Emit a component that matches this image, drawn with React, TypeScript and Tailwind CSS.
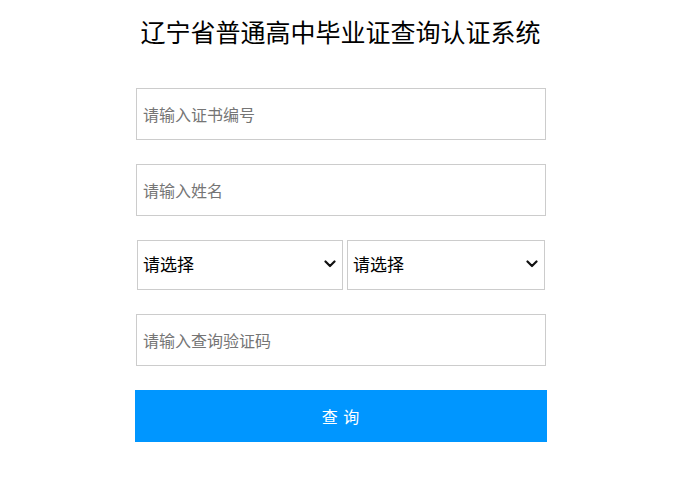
import React from "react";

const font = { fontFamily: '"Noto Sans CJK SC", "Noto Sans", sans-serif' };

function Chevron() {
  return (
    <svg width="12" height="8" viewBox="0 0 12 8" className="shrink-0">
      <path d="M1.5 1.5 L6 6 L10.5 1.5" fill="none" stroke="#111" strokeWidth="2.2" strokeLinecap="round" strokeLinejoin="round" />
    </svg>
  );
}

function Field({ placeholder }: { placeholder: string }) {
  return (
    <div className="h-[52px] w-[410px] ml-[1px] border border-[#cccccc] flex items-center pl-[6px] pb-[1px] bg-white">
      <input
        className="w-full outline-none text-[16px] text-black placeholder:text-[#757575] bg-transparent"
        style={font}
        placeholder={placeholder}
      />
    </div>
  );
}

function Select({ w }: { w: string }) {
  return (
    <div className={`h-[50px] ${w} border border-[#cccccc] flex items-center justify-between pl-[5px] pr-[6px] pb-[2px] bg-white`}>
      <span className="text-[17px] text-black" style={font}>请选择</span>
      <Chevron />
    </div>
  );
}

export default function App() {
  return (
    <div className="w-[678px] h-[485px] bg-white" style={font}>
      <div className="pt-[14px] text-center text-[25px] leading-[34px] text-black pl-[3px]">
        辽宁省普通高中毕业证查询认证系统
      </div>
      <div className="ml-[135px] mt-[40px] w-[412px] flex flex-col gap-[24px]">
        <Field placeholder="请输入证书编号" />
        <Field placeholder="请输入姓名" />
        <div className="flex ml-[2px] gap-[4px]">
          <Select w="w-[206px]" />
          <Select w="w-[198px]" />
        </div>
        <Field placeholder="请输入查询验证码" />
        <button className="h-[52px] w-[412px] bg-[#0096ff] text-white text-[16px] tracking-[1px]" style={font}>
          查 询
        </button>
      </div>
    </div>
  );
}
